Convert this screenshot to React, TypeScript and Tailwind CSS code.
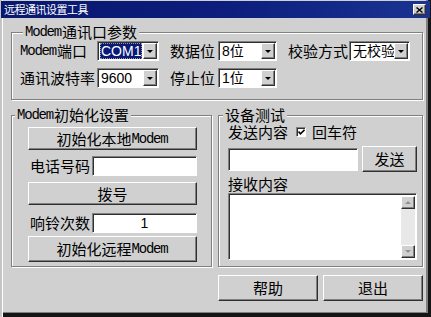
const cjk = "font-['Noto_Sans_CJK_SC',sans-serif]";
const mono = "font-['Liberation_Mono',monospace] text-[14px] leading-none tracking-[-1.2px]";
const sans = "font-['Liberation_Sans','Noto_Sans_CJK_SC',sans-serif]";

const raised =
  "bg-[#d0d0d0] border border-t-white border-l-white border-r-[#303030] border-b-[#303030] shadow-[inset_-1px_-1px_0_#808080]";
const sunken =
  "bg-white border border-t-[#808080] border-l-[#808080] border-r-white border-b-white shadow-[inset_1px_1px_0_#303030]";

const Modem = () => <span className={`${mono} mr-[1px]`}>Modem</span>;

const Arrow = ({ up, gray }: { up?: boolean; gray?: boolean }) => (
  <div
    className={`h-0 w-0 border-x-[3px] border-x-transparent ${
      up
        ? gray
          ? "border-b-[3px] border-b-[#909090]"
          : "border-b-[3px] border-b-black"
        : gray
          ? "border-t-[3px] border-t-[#909090]"
          : "border-t-[3px] border-t-black"
    }`}
  />
);

const Combo = ({
  value,
  width,
  selected,
}: {
  value: string;
  width: string;
  selected?: boolean;
}) => (
  <div className={`flex h-[20px] ${width} ${sunken} p-[1px] pl-[2px]`}>
    <div className="flex flex-1 items-center overflow-hidden pr-[1px]">
      <div
        className={`flex h-full w-full items-center whitespace-nowrap pl-[1px] ${sans} text-[14px] ${
          selected
            ? "bg-[#0a1a78] text-white outline-1 outline-dotted outline-[#9a9a9a] -outline-offset-1"
            : "text-black"
        }`}
      >
        {value}
      </div>
    </div>
    <div className={`flex w-[14px] items-center justify-center ${raised}`}>
      <Arrow />
    </div>
  </div>
);

const Button = ({
  children,
  className,
}: {
  children: React.ReactNode;
  className: string;
}) => (
  <div
    className={`flex items-center justify-center ${raised} ${cjk} text-[15px] leading-[18px] text-black ${className}`}
  >
    {children}
  </div>
);

const Group = ({
  title,
  titleLeft,
  className,
  children,
}: {
  title: React.ReactNode;
  titleLeft: string;
  className: string;
  children: React.ReactNode;
}) => (
  <div
    className={`relative border border-[#808080] shadow-[inset_1px_1px_0_#ffffff,1px_1px_0_#ffffff] ${className}`}
  >
    <div
      className={`absolute top-[-8px] flex h-[14px] items-center whitespace-nowrap bg-[#d0d0d0] px-[2px] ${titleLeft} ${cjk} text-[15px] leading-[14px] text-black`}
    >
      {title}
    </div>
    {children}
  </div>
);

const Label = ({
  children,
  className,
}: {
  children: React.ReactNode;
  className: string;
}) => (
  <div
    className={`flex h-[20px] items-center whitespace-nowrap ${cjk} text-[15px] leading-[20px] text-black ${className}`}
  >
    {children}
  </div>
);

export default function App() {
  return (
    <div className="flex h-[317px] w-[431px] flex-col overflow-hidden bg-[#d0d0d0] shadow-[inset_2px_0_0_#c4c4c4,inset_3px_0_0_#ffffff,inset_-3px_-4px_0_#151515,inset_-5px_-5px_0_#808080]">
      {/* title bar */}
      <div className="mx-[1px] mt-[1px] flex h-[17px] items-center justify-between bg-linear-to-r from-[#08186e] via-[#0c1d7c] to-[#1a3391] pl-[3px] pr-[4px]">
        <span className={`${cjk} text-[11px] leading-[17px] tracking-[-0.5px] text-white`}>
          远程通讯设置工具
        </span>
        <div className={`flex h-[11px] w-[13px] items-center justify-center ${raised}`}>
          <svg width="7" height="6" viewBox="0 0 7 6">
            <path d="M0.5 0.5 L6.5 5.5 M6.5 0.5 L0.5 5.5" stroke="#000" strokeWidth="1.4" />
          </svg>
        </div>
      </div>

      <div className="flex flex-col pl-[11px] pt-[14px]">
        {/* port settings */}
        <Group
          className="h-[68px] w-[412px]"
          titleLeft="left-[11px]"
          title={
            <>
              <Modem />
              通讯口参数
            </>
          }
        >
          <div className="flex flex-col gap-[7px] pl-[8px] pt-[8px]">
            <div className="flex">
              <Label className="w-[77px]">
                <Modem />
                端口
              </Label>
              <Combo value="COM1" width="w-[62px]" selected />
              <Label className="ml-[11px] w-[48px]">数据位</Label>
              <Combo value="8位" width="w-[59px]" />
              <Label className="ml-[11px] w-[61px]">校验方式</Label>
              <Combo value="无校验" width="w-[61px]" />
            </div>
            <div className="flex">
              <Label className="w-[77px]">通讯波特率</Label>
              <Combo value="9600" width="w-[62px]" />
              <Label className="ml-[11px] w-[48px]">停止位</Label>
              <Combo value="1位" width="w-[59px]" />
            </div>
          </div>
        </Group>

        <div className="mt-[15px] flex gap-[6px]">
          {/* modem init */}
          <Group
            className="h-[152px] w-[201px]"
            titleLeft="left-[3px]"
            title={
              <>
                <Modem />
                初始化设置
              </>
            }
          >
            <div className="flex flex-col pl-[16px] pt-[11px]">
              <Button className="h-[23px] w-[169px]">
                初始化本地
                <Modem />
              </Button>
              <div className="mt-[6px] flex">
                <Label className="ml-[2px] w-[62px]">电话号码</Label>
                <div className={`h-[20px] w-[105px] ${sunken}`} />
              </div>
              <Button className="mt-[6px] h-[23px] w-[169px]">拨号</Button>
              <div className="mt-[8px] flex">
                <Label className="ml-[2px] w-[62px]">响铃次数</Label>
                <div
                  className={`flex h-[20px] w-[105px] items-center justify-center ${sunken} ${sans} text-[14px] text-black`}
                >
                  1
                </div>
              </div>
              <Button className="mt-[3px] h-[26px] w-[169px]">
                初始化远程
                <Modem />
              </Button>
            </div>
          </Group>

          {/* device test */}
          <Group className="h-[152px] w-[205px]" titleLeft="left-[4px]" title="设备测试">
            <div className="flex flex-col pl-[9px] pt-[8px]">
              <div className={`flex h-[15px] items-center ${cjk} text-[15px] leading-[15px] text-black`}>
                <span>发送内容</span>
                <div className={`ml-[8px] flex h-[10px] w-[10px] items-center justify-center ${sunken}`}>
                  <svg width="7" height="6" viewBox="0 0 7 6">
                    <path d="M0.5 2.5 L2.5 4.8 L6.5 0.8" stroke="#000" strokeWidth="1.6" fill="none" />
                  </svg>
                </div>
                <span className="ml-[6px]">回车符</span>
              </div>
              <div className="mt-[7px] flex items-start">
                <div className={`mt-[2px] h-[23px] w-[130px] ${sunken}`} />
                <Button className="ml-[4px] h-[26px] w-[55px]">发送</Button>
              </div>
              <div className={`mt-[4px] flex h-[16px] items-center ${cjk} text-[15px] leading-[16px] text-black`}>
                接收内容
              </div>
              <div className={`mt-[1px] flex h-[67px] w-[189px] justify-end p-[1px] pl-[2px] pt-[2px] ${sunken}`}>
                <div className="flex w-[14px] flex-col">
                  <div className={`flex h-[13px] items-center justify-center ${raised}`}>
                    <Arrow up gray />
                  </div>
                  <div className="flex-1 bg-[#e8e8e8]" />
                  <div className={`flex h-[13px] items-center justify-center ${raised}`}>
                    <Arrow gray />
                  </div>
                </div>
              </div>
            </div>
          </Group>
        </div>

        <div className="ml-[207px] mt-[8px] flex gap-[5px]">
          <Button className="h-[26px] w-[100px]">帮助</Button>
          <Button className="h-[26px] w-[100px]">退出</Button>
        </div>
      </div>
    </div>
  );
}
